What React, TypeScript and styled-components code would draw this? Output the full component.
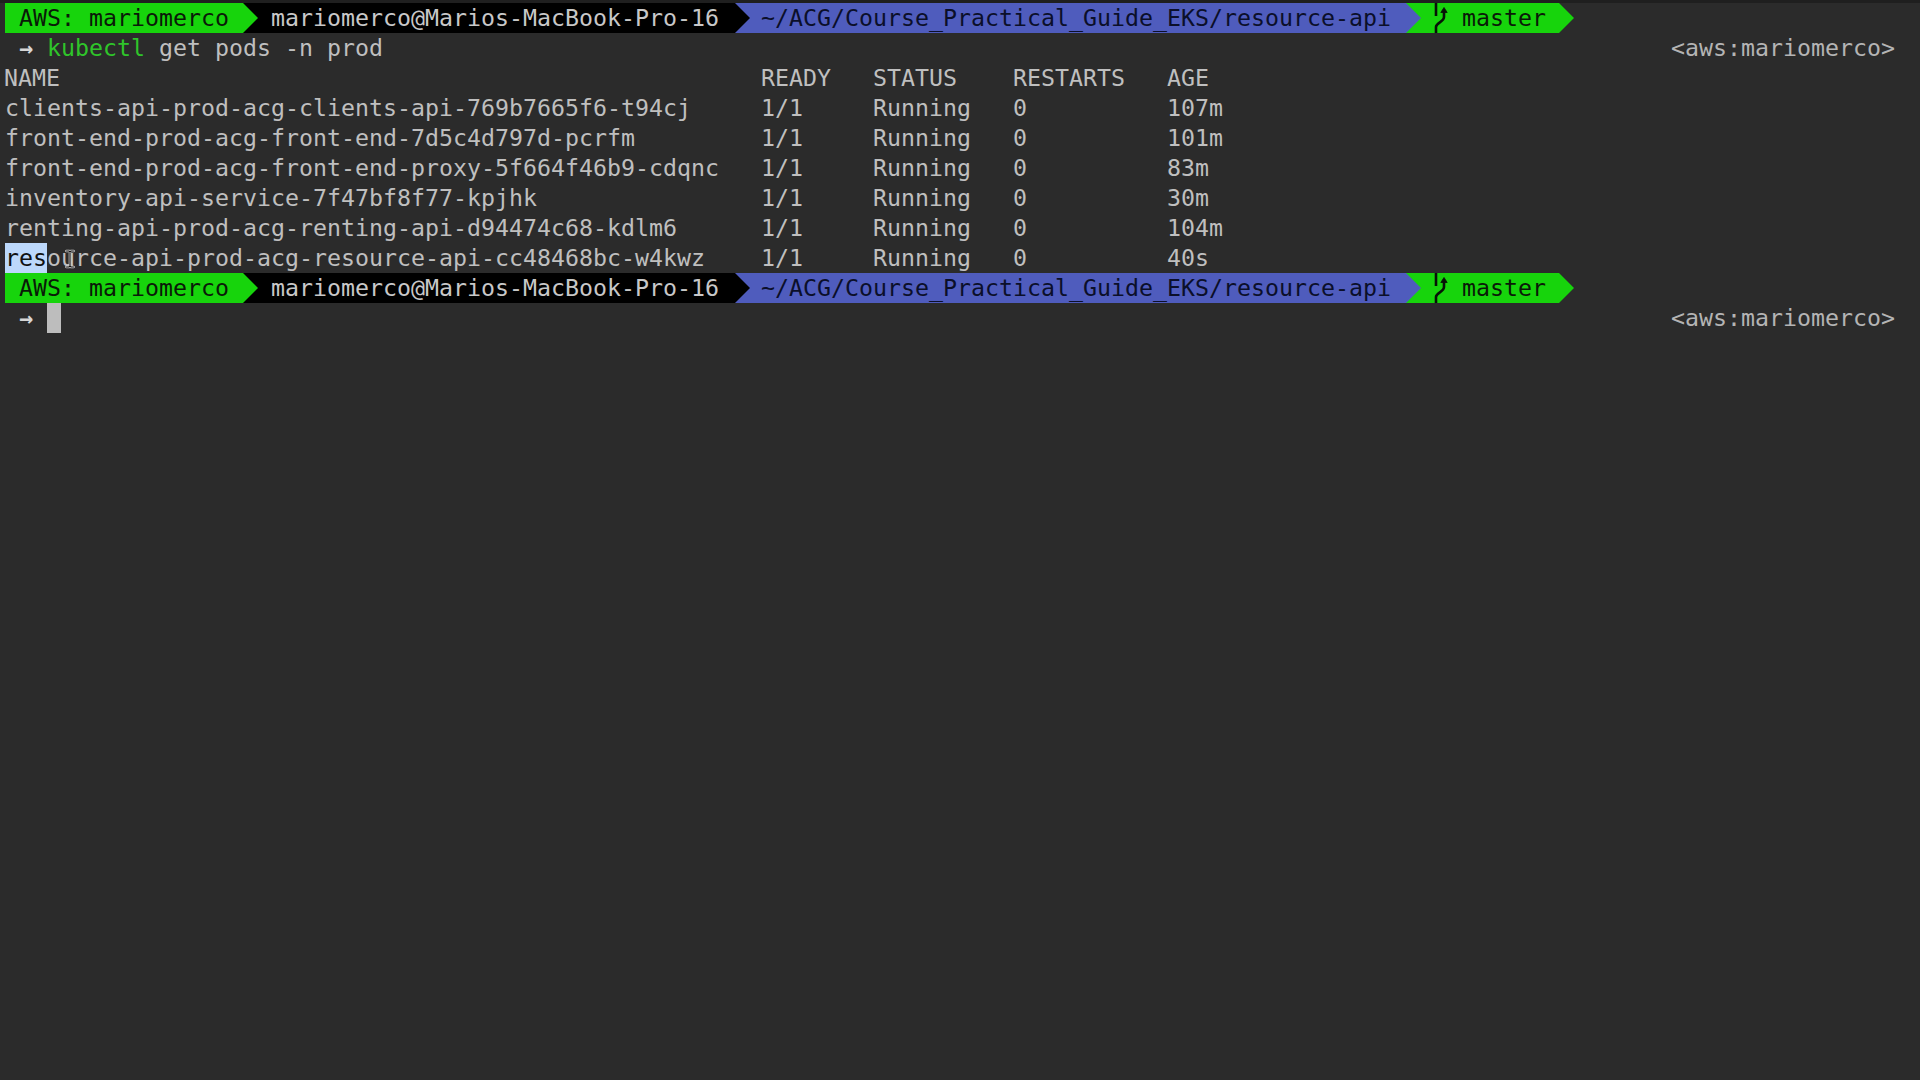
import React, { FC } from 'react';
import styled, { createGlobalStyle } from 'styled-components';

const GlobalStyle = createGlobalStyle`
  html, body {
    margin: 0;
    height: 100%;
    background: #2b2b2b;
  }
`;

const Terminal = styled.div`
  box-sizing: border-box;
  width: 1920px;
  height: 1080px;
  overflow: hidden;
  background: #2b2b2b;
  border-top: 3px solid #1f1f1f;
  color: #bfbfbf;
  font-family: 'DejaVu Sans Mono', 'Liberation Mono', monospace;
  font-size: 23.26px;
  line-height: 30px;
  white-space: pre;
`;

const PromptBar = styled.div`
  display: flex;
  height: 30px;
  padding-left: 5px;
`;

const Segment = styled.div<{ $bg: string; $fg: string; $width: number; $z: number; $pad: number }>`
  position: relative;
  z-index: ${(p) => p.$z};
  box-sizing: border-box;
  display: flex;
  align-items: center;
  gap: 10px;
  width: ${(p) => p.$width}px;
  padding-left: ${(p) => p.$pad}px;
  background: ${(p) => p.$bg};
  color: ${(p) => p.$fg};

  &::after {
    content: '';
    position: absolute;
    top: 0;
    left: 100%;
    border-style: solid;
    border-width: 15px 0 15px 15px;
    border-color: transparent transparent transparent ${(p) => p.$bg};
  }
`;

const CommandLine = styled.div`
  display: flex;
  justify-content: space-between;
  height: 30px;
  padding: 0 25px 0 19px;
`;

const PromptText = styled.div`
  display: flex;
`;

const Arrow = styled.span`
  width: 28px;
  color: #d6d6d6;
  font-weight: 700;
`;

const Command = styled.span`
  color: #2fc52a;
`;

const RightPrompt = styled.span`
  color: #b4b4b4;
`;

const PodGrid = styled.div`
  display: grid;
  grid-template-columns: 756px 112px 140px 154px 1fr;
  grid-auto-rows: 30px;
  padding-left: 5px;
`;

const HeaderCell = styled.div<{ $first?: boolean }>`
  margin-left: ${(p) => (p.$first ? -1 : 0)}px;
`;

const Cell = styled.div``;

const NameCell = styled.div`
  position: relative;
`;

const Selection = styled.span`
  background: #bcd8fb;
  color: #111111;
  display: inline-block;
  height: 30px;
`;

const IBeam = styled.svg`
  position: absolute;
  left: 58px;
  top: 6px;
`;

const Cursor = styled.span`
  display: block;
  width: 14px;
  height: 30px;
  background: #bdbdbd;
`;

const BranchGlyph = styled.svg`
  flex: none;
  margin-left: -3px;
`;

const BranchIcon: FC = () => (
  <BranchGlyph width="18" height="30" viewBox="0 0 18 30" fill="none" stroke="#071207" strokeWidth="2.6">
    <path d="M2 0V13" />
    <path d="M2 30V24C2 19.5 10 19 10 14V7" />
    <path d="M6.8 9.5L10 4.5L13.2 9.5Z" fill="#071207" strokeWidth="0.8" />
  </BranchGlyph>
);

const Prompt: FC = () => (
  <PromptBar>
    <Segment $bg="#17d40c" $fg="#0a1a08" $width={238} $z={4} $pad={14}>AWS: mariomerco</Segment>
    <Segment $bg="#000000" $fg="#c8c8c8" $width={492} $z={3} $pad={28}>mariomerco@Marios-MacBook-Pro-16</Segment>
    <Segment $bg="#4f5cbd" $fg="#0b0f2a" $width={671} $z={2} $pad={26}>~/ACG/Course_Practical_Guide_EKS/resource-api</Segment>
    <Segment $bg="#17d40c" $fg="#0a1a08" $width={153} $z={1} $pad={31}><BranchIcon />master</Segment>
  </PromptBar>
);

type Pod = { name: string; restarts: string; age: string };

const pods: Pod[] = [
  { name: 'clients-api-prod-acg-clients-api-769b7665f6-t94cj', restarts: '0', age: '107m' },
  { name: 'front-end-prod-acg-front-end-7d5c4d797d-pcrfm', restarts: '0', age: '101m' },
  { name: 'front-end-prod-acg-front-end-proxy-5f664f46b9-cdqnc', restarts: '0', age: '83m' },
  { name: 'inventory-api-service-7f47bf8f77-kpjhk', restarts: '0', age: '30m' },
  { name: 'renting-api-prod-acg-renting-api-d94474c68-kdlm6', restarts: '0', age: '104m' },
];

const App: FC = () => (
  <Terminal>
    <GlobalStyle />
    <Prompt />
    <CommandLine>
      <PromptText>
        <Arrow>→</Arrow>
        <span>
          <Command>kubectl</Command> get pods -n prod
        </span>
      </PromptText>
      <RightPrompt>&lt;aws:mariomerco&gt;</RightPrompt>
    </CommandLine>
    <PodGrid>
      <HeaderCell $first>NAME</HeaderCell>
      <HeaderCell>READY</HeaderCell>
      <HeaderCell>STATUS</HeaderCell>
      <HeaderCell>RESTARTS</HeaderCell>
      <HeaderCell>AGE</HeaderCell>
      {pods.map((pod) => (
        <React.Fragment key={pod.name}>
          <Cell>{pod.name}</Cell>
          <Cell>1/1</Cell>
          <Cell>Running</Cell>
          <Cell>{pod.restarts}</Cell>
          <Cell>{pod.age}</Cell>
        </React.Fragment>
      ))}
      <NameCell>
        <Selection>res</Selection>ource-api-prod-acg-resource-api-cc48468bc-w4kwz
        <IBeam width="14" height="20" viewBox="0 0 14 20" fill="none" strokeLinecap="round">
          <path d="M3.5 2H6L7 3L8 2H10.5M7 3V17M3.5 18H6L7 17L8 18H10.5" stroke="#d8d8d8" strokeWidth="2.6" />
          <path d="M3.5 2H6L7 3L8 2H10.5M7 3V17M3.5 18H6L7 17L8 18H10.5" stroke="#111111" strokeWidth="1.1" />
        </IBeam>
      </NameCell>
      <Cell>1/1</Cell>
      <Cell>Running</Cell>
      <Cell>0</Cell>
      <Cell>40s</Cell>
    </PodGrid>
    <Prompt />
    <CommandLine>
      <PromptText>
        <Arrow>→</Arrow>
        <Cursor />
      </PromptText>
      <RightPrompt>&lt;aws:mariomerco&gt;</RightPrompt>
    </CommandLine>
  </Terminal>
);

export default App;
